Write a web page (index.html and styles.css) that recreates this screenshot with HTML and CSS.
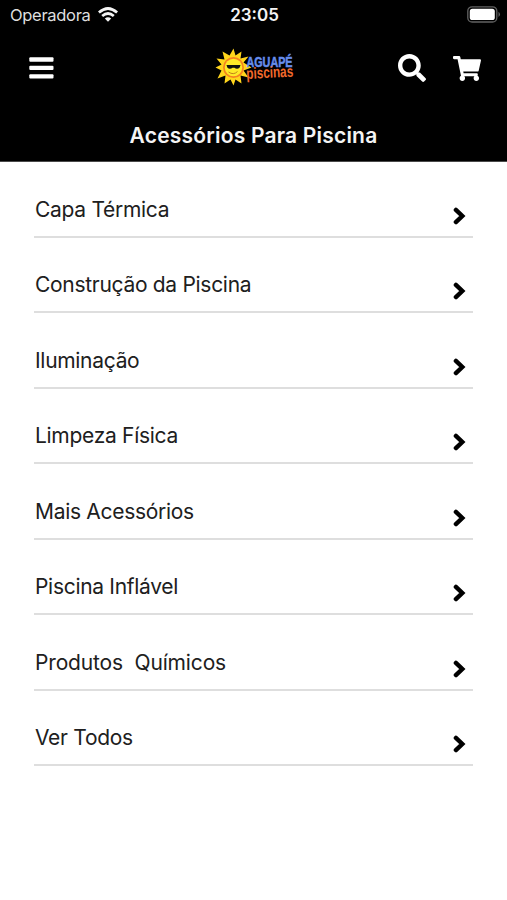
FILE: index.html
```html
<!DOCTYPE html>
<html lang="pt-BR">
<head>
<meta charset="utf-8">
<title>Aguapé Piscinas</title>
<link rel="stylesheet" href="styles.css">
</head>
<body>
<header class="header">
  <div class="status">
    <div class="carrier"><span class="operator">Operadora</span>
      <svg class="wifi" width="20" height="15" viewBox="0 0 20 15"><g fill="none" stroke="#f4f4f4" stroke-width="2.7"><path d="M.9 5.600Q10-2.600 19.100 5.600"/><path d="M4.200 9.100Q10 3.900 15.800 9.100"/></g><path d="M6.800 11.500Q10 8.900 13.200 11.500L10 14.800z" fill="#f4f4f4"/></svg>
    </div>
    <time class="clock">23:05</time>
    <svg class="battery" width="34" height="17" viewBox="0 0 34 17"><rect x=".8" y=".8" width="29" height="15.2" rx="4.300" fill="none" stroke="#626262" stroke-width="1.300"/><rect x="2.800" y="2.800" width="25" height="11.200" rx="2.600" fill="#fff"/><path d="M31.500 5.800q3 2.600 0 5.200z" fill="#626262"/></svg>
  </div>
  <nav class="toolbar">
    <svg class="menu" width="25" height="22" viewBox="0 0 25 22" fill="#fff"><rect x=".3" y=".3" width="24.200" height="4.400" rx="1"/><rect x=".3" y="8.700" width="24.200" height="4.400" rx="1"/><rect x=".3" y="17.200" width="24.200" height="4.400" rx="1"/></svg>
    <svg class="logo" width="86" height="44" viewBox="-2.500 -2.500 86 44">
      <path d="M19 0l2 7 6-4-1 7 8-2-5 6 8 5-8 3 5 7-8-2 1 8-6-4-2 6-3-6-6 4 1-8-8 3 4-8-6-3 6-3-5-6 8 1-2-8 7 4z" fill="#ffd51c"/>
      <circle cx="19" cy="19" r="10.500" fill="#f58220"/><circle cx="19" cy="19" r="8.700" fill="#ffe928"/>
      <path d="M12 16.500h14l-.8 2.500q-2.600 2.400-5.300.2h-1.800q-3 2.300-5.300-.2z" fill="#111"/><path d="M14 23.500q5 3.500 9-.5" fill="none" stroke="#c0821a" stroke-width="1"/>
      <text class="brand-top" x="32" y="18.500" textLength="46" lengthAdjust="spacingAndGlyphs">AGUAPÉ</text>
      <text class="brand-bottom" x="32" y="30.500" textLength="47" lengthAdjust="spacingAndGlyphs" transform="rotate(-3 32 31)">piscinas</text>
    </svg>
    <div class="actions">
      <svg width="28" height="28" viewBox="0 0 512 512" fill="#fff"><path d="M505 442.700L405.300 343c-4.500-4.500-10.600-7-17-7H372c27.600-35.300 44-79.700 44-128C416 93.100 322.900 0 208 0S0 93.100 0 208s93.100 208 208 208c48.300 0 92.700-16.400 128-44v16.300c0 6.400 2.500 12.500 7 17l99.700 99.700c9.400 9.400 24.600 9.400 33.900 0l28.300-28.300c9.400-9.400 9.400-24.600.1-34zM208 336c-70.700 0-128-57.200-128-128 0-70.700 57.200-128 128-128 70.700 0 128 57.200 128 128 0 70.700-57.200 128-128 128z"/></svg>
      <svg width="28" height="25" viewBox="0 0 576 512" fill="#fff"><path d="M528.120 301.319l47.273-208C578.806 78.301 567.391 64 551.990 64H159.208l-9.166-44.810C147.758 8.021 137.930 0 126.529 0H24C10.745 0 0 10.745 0 24v16c0 13.255 10.745 24 24 24h69.883l70.248 343.435C147.325 417.100 136 435.222 136 456c0 30.928 25.072 56 56 56s56-25.072 56-56c0-15.674-6.447-29.835-16.824-40h209.647C430.447 426.165 424 440.326 424 456c0 30.928 25.072 56 56 56s56-25.072 56-56c0-22.172-12.888-41.332-31.579-50.405l5.517-24.276c3.413-15.018-8.002-29.319-23.403-29.319H218.117l-6.545-32h293.145c11.206 0 20.920-7.754 23.403-18.681z"/></svg>
    </div>
  </nav>
  <h1 class="title">Acessórios Para Piscina</h1>
</header>
<svg class="symbols" width="0" height="0"><symbol id="chevron" viewBox="0 0 13 18"><path d="M2.900 2.900L9.300 9l-6.400 6.100" fill="none" stroke="#000" stroke-width="4.400" stroke-linecap="round"/></symbol></svg>
<main class="list">
  <a class="row"><span>Capa Térmica</span><svg class="chevron"><use href="#chevron"/></svg></a>
  <a class="row"><span>Construção da Piscina</span><svg class="chevron"><use href="#chevron"/></svg></a>
  <a class="row"><span>Iluminação</span><svg class="chevron"><use href="#chevron"/></svg></a>
  <a class="row"><span>Limpeza Física</span><svg class="chevron"><use href="#chevron"/></svg></a>
  <a class="row"><span>Mais Acessórios</span><svg class="chevron"><use href="#chevron"/></svg></a>
  <a class="row"><span>Piscina Inflável</span><svg class="chevron"><use href="#chevron"/></svg></a>
  <a class="row"><span class="spaced">Produtos&nbsp; Químicos</span><svg class="chevron"><use href="#chevron"/></svg></a>
  <a class="row"><span>Ver Todos</span><svg class="chevron"><use href="#chevron"/></svg></a>
</main>
</body>
</html>
```
FILE: styles.css
```css
* { box-sizing: border-box; }
body { margin: 0; min-height: 900px; background: #fff; font-family: Inter, "Liberation Sans", sans-serif; color: #202020; }
svg { display: block; flex: none; }
.header { height: 162px; background: #000; color: #f4f4f4; border-bottom: 1px solid #4a4a4a; }
.status { height: 30px; padding: 0 6px 0 10px; display: grid; grid-template-columns: 1fr auto 1fr; align-items: center; }
.carrier { display: flex; align-items: center; gap: 7px; }
.operator { font-size: 16.5px; letter-spacing: -0.3px; line-height: 30px; color: #dedede; }
.wifi { margin-top: -1px; }
.clock { font-size: 17px; font-weight: 600; line-height: 30px; margin-right: 2px; }
.battery { justify-self: end; margin-top: -2px; }
.toolbar { height: 76px; padding: 0 26px 0 29px; display: grid; grid-template-columns: 1fr auto 1fr; align-items: center; }
.logo { overflow: visible; }
.actions { display: flex; justify-content: flex-end; align-items: center; gap: 27px; }
.brand-top { font: 700 14.5px "Liberation Sans", sans-serif; fill: #668dec; stroke: #668dec; stroke-width: .5px; }
.brand-bottom { font: 700 16px "Liberation Sans", sans-serif; fill: #f2692b; }
.title { margin: 15px 0 0; font-size: 21px; letter-spacing: 0.2px; line-height: 30px; font-weight: 600; text-align: center; }
.symbols { position: absolute; }
.list { margin: 0 34px; }
.row { height: 75.5px; display: flex; justify-content: space-between; align-items: flex-end; border-bottom: 2px solid #dedede; font-size: 21px; letter-spacing: -0.3px; line-height: 30px; padding: 0 0 11px 1px; }
.spaced { letter-spacing: -0.15px; }
.chevron { width: 13px; height: 18px; margin-right: 7px; }
```
